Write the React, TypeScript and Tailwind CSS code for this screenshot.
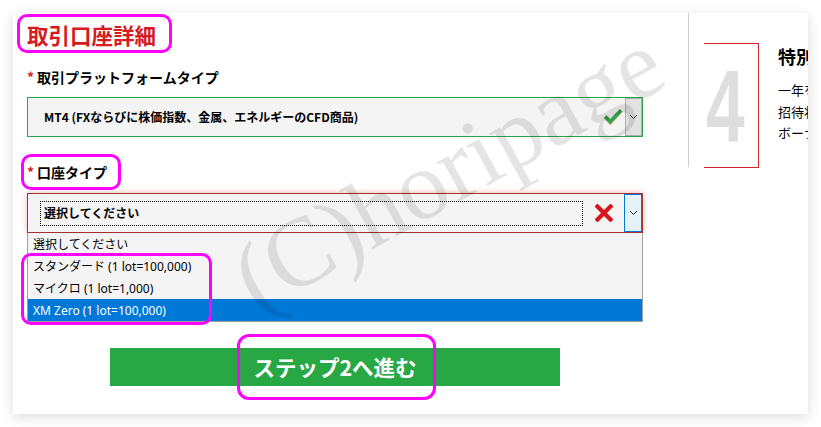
import React from 'react';

const jp = { fontFamily: '"Noto Sans CJK JP", "Noto Sans", sans-serif' };
const ui = { fontFamily: '"Noto Sans", "Noto Sans CJK JP", sans-serif' };

const options = [
  '選択してください',
  'スタンダード (1 lot=100,000)',
  'マイクロ (1 lot=1,000)',
  'XM Zero (1 lot=100,000)',
];

function Chevron() {
  return (
    <svg width="9" height="6" viewBox="0 0 9 6">
      <path d="M1 1 L4.5 4.5 L8 1" fill="none" stroke="#333" strokeWidth="1" />
    </svg>
  );
}

function CheckIcon() {
  return (
    <svg width="22" height="18" viewBox="0 0 22 18">
      <path d="M2 9 L8 15 L20 2" fill="none" stroke="#b08a4a" strokeWidth="4.5" strokeLinejoin="miter" opacity="0.5" />
      <path d="M2.5 8.5 L8 14 L20 1.5" fill="none" stroke="#35a04a" strokeWidth="4" strokeLinejoin="miter" />
    </svg>
  );
}

function CrossIcon() {
  return (
    <svg width="18" height="18" viewBox="0 0 18 18">
      <path d="M2.5 2.5 L15.5 15.5 M15.5 2.5 L2.5 15.5" stroke="#d8141f" strokeWidth="4.2" strokeLinecap="square" />
    </svg>
  );
}

function Label({ text }: { text: string }) {
  return (
    <div className="h-[20px] flex items-center text-[14px] font-bold text-black" style={jp}>
      <span className="text-[#d0202a] mr-[3px]">*</span>
      {text}
    </div>
  );
}

export default function App() {
  return (
    <div className="w-[821px] h-[427px] bg-white pt-[13px] pl-[13px]">
      <div
        className="relative w-[795px] h-[401px] bg-white overflow-hidden shadow-[0_3px_12px_rgba(0,0,0,0.14)] flex"
        style={jp}
      >
        {/* form column */}
        <div className="w-[630px] shrink-0 pl-[14px] pt-[8px]">
          <h1 className="h-[28px] leading-[28px] text-[21.5px] font-bold text-[#d71920]">取引口座詳細</h1>

          <div className="mt-[18px]">
            <Label text="取引プラットフォームタイプ" />
          </div>
          <div className="mt-[10px] h-[40px] w-[616px] border border-[#2ea44a] bg-[#f4f4f4] flex items-center">
            <div className="flex-1 pl-[16px] text-[12px] font-bold text-black">
              MT4 (FXならびに株価指数、金属、エネルギーのCFD商品)
            </div>
            <div className="w-[20px] flex justify-center mr-[2px]">
              <CheckIcon />
            </div>
            <div className="w-[17px] h-[38px] bg-[#e1e1e1] border border-[#adadad] flex items-center justify-center">
              <Chevron />
            </div>
          </div>

          <div className="mt-[25px]">
            <Label text="口座タイプ" />
          </div>
          <div className="mt-[11px] h-[40px] w-[616px] border border-[#a33232] bg-[#f4f4f4] flex items-center shadow-[0_0_6px_rgba(200,40,40,0.35)]">
            <div className="ml-[12px] w-[543px] h-[25px] border border-dotted border-black flex items-center pl-[3px] text-[12px] font-bold text-black">
              選択してください
            </div>
            <div className="flex-1 flex justify-center">
              <CrossIcon />
            </div>
            <div className="w-[18px] h-[38px] bg-[#e5f1fb] border border-[#0078d7] flex items-center justify-center">
              <Chevron />
            </div>
          </div>
          <div className="w-[616px] h-[89px] border-x border-b border-[#a0a0a0] bg-[#f4f4f4]" style={ui}>
            {options.map((o, i) => (
              <div
                key={o}
                className={
                  i === 3
                    ? 'h-[22px] pl-[5px] pt-[2px] flex items-center text-[12px] bg-[#0078d7] text-white'
                    : 'h-[22px] pl-[5px] pt-[2px] flex items-center text-[12px] text-black'
                }
              >
                {o}
              </div>
            ))}
          </div>

          <button className="mt-[26px] ml-[83px] w-[450px] h-[38px] bg-[#28a745] text-white text-[21.5px] font-bold flex items-center justify-center">
            ステップ2へ進む
          </button>
        </div>

        {/* divider */}
        <div className="ml-[45px] w-px h-[154px] bg-[#cfcfcf] shrink-0" />

        {/* step column */}
        <div className="ml-[15px] pt-[30px] flex shrink-0">
          <div className="w-[55px] h-[125px] border-y border-r border-[#d3232b] flex items-center overflow-hidden">
            <span
              className="inline-block text-[102px] leading-none font-bold text-[#dedede] scale-x-[0.68] origin-left ml-[2px]"
              style={{ fontFamily: '"Liberation Sans", sans-serif' }}
            >
              4
            </span>
          </div>
          <div className="ml-[19px] w-[200px] pt-[1px]">
            <div className="text-[18px] font-bold text-black leading-[24px]">特別ボーナス</div>
            <div className="mt-[11px] text-[13px] leading-[21.5px] text-black">
              <div>一年を通して</div>
              <div>招待状をお送りします</div>
              <div>ボーナス</div>
            </div>
          </div>
        </div>

        {/* watermark */}
        <div
          className="pointer-events-none absolute left-[198px] top-[108px] text-[98px] leading-none text-black/10 -rotate-[29deg] whitespace-nowrap"
          style={{ fontFamily: '"Liberation Serif", serif' }}
        >
          (C)horipage
        </div>

        {/* annotation boxes */}
        <div className="pointer-events-none absolute left-[4px] top-[1px] w-[155px] h-[39px] border-[3px] border-[#ff00ff] rounded-[10px]" />
        <div className="pointer-events-none absolute left-[8px] top-[141px] w-[100px] h-[36px] border-[3px] border-[#ff00ff] rounded-[10px]" />
        <div className="pointer-events-none absolute left-[8px] top-[240px] w-[191px] h-[72px] border-[3px] border-[#ff00ff] rounded-[10px]" />
        <div className="pointer-events-none absolute left-[224px] top-[321px] w-[199px] h-[66px] border-[3px] border-[#ff00ff] rounded-[12px]" />
      </div>
    </div>
  );
}
